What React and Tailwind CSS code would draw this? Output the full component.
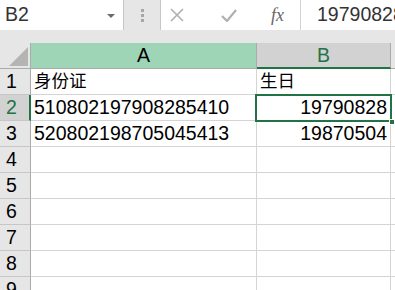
import { Fragment } from 'react';

const rows = [
  { n: 1, a: '身份证', b: '生日', cjk: true },
  { n: 2, a: '510802197908285410', b: '19790828' },
  { n: 3, a: '520802198705045413', b: '19870504' },
  { n: 4 },
  { n: 5 },
  { n: 6 },
  { n: 7 },
  { n: 8 },
  { n: 9 },
];

const font = { fontFamily: '"Liberation Sans", "Noto Sans CJK SC", sans-serif' };

function CellText({ children, cjk, right }) {
  return (
    <span
      className={`${cjk ? 'text-[17.5px]' : 'text-[19.5px]'} leading-[22px] text-black ${right ? 'ml-auto pr-[3px]' : 'pl-[3px]'}`}
    >
      {children}
    </span>
  );
}

export default function App() {
  return (
    <div className="w-[395px] h-[290px] overflow-hidden bg-white relative" style={font}>
      {/* formula bar */}
      <div className="flex h-[30px] bg-white">
        <div className="w-[124px] border-r border-[#c6c6c6] flex items-center pl-[5px] pr-[8px]">
          <span className="text-[19.5px] text-[#333]">B2</span>
          <span className="ml-auto mt-[1px] w-0 h-0 border-l-[4px] border-r-[4px] border-t-[4px] border-l-transparent border-r-transparent border-t-[#6b6b6b]" />
        </div>
        <div className="w-[37px] bg-[#e6e6e6] border-r border-[#c6c6c6] flex flex-col items-center justify-center gap-[2px] pl-[1px]">
          <span className="w-[3px] h-[3px] bg-[#a6a6a6]" />
          <span className="w-[3px] h-[3px] bg-[#a6a6a6]" />
          <span className="w-[3px] h-[3px] bg-[#a6a6a6]" />
        </div>
        <div className="flex items-center w-[140px] border-r border-[#d4d4d4] h-full shrink-0">
          <svg width="14" height="14" viewBox="0 0 14 14" className="ml-[9px]">
            <path d="M1 1 L13 13 M13 1 L1 13" stroke="#b0b0b0" strokeWidth="1.6" fill="none" />
          </svg>
          <svg width="16" height="13" viewBox="0 0 16 13" className="ml-[37px]">
            <path d="M1 7 L6 12 L15 1" stroke="#b0b0b0" strokeWidth="2.2" fill="none" />
          </svg>
          <span className="ml-[34px] text-[18px] italic text-[#666]" style={{ fontFamily: '"Liberation Serif", serif' }}>
            fx
          </span>
        </div>
        <div className="flex-1 flex items-center pl-[16px] min-w-0">
          <span className="text-[19.5px] text-[#333] whitespace-nowrap">19790828</span>
        </div>
      </div>

      {/* gray band */}
      <div className="h-[13px] bg-[#e6e6e6]" />

      {/* grid */}
      <div className="grid grid-cols-[31px_226px_134px_1fr] grid-rows-[26px] auto-rows-[26px]">
        <div className="bg-[#e6e6e6] border-r border-b border-[#ababab] relative">
          <svg width="19" height="19" viewBox="0 0 19 19" className="absolute right-[2px] bottom-[2px]">
            <path d="M19 0 L19 19 L0 19 Z" fill="#b4b4b4" />
          </svg>
        </div>
        <div className="bg-[#9fd5b7] border-r border-b border-[#ababab] flex items-end justify-center pb-[2px]">
          <span className="text-[19.5px] leading-[22px] text-black">A</span>
        </div>
        <div className="bg-[#d2d2d2] border-r border-[#ababab] border-b-2 border-b-[#217346] flex items-end justify-center pb-[1px]">
          <span className="text-[19.5px] leading-[22px] text-[#217346]">B</span>
        </div>
        <div className="bg-[#e6e6e6] border-b border-[#ababab]" />

        {rows.map((r) => {
          const sel = r.n === 2;
          return (
            <Fragment key={r.n}>
              <div
                className={`${sel ? 'bg-[#d2d2d2] border-r-2 border-r-[#217346] text-[#217346]' : 'bg-[#e6e6e6] border-r border-r-[#ababab] text-black'} border-b border-b-[#c6c6c6] flex items-end pl-[6px] pb-[2px]`}
              >
                <span className="text-[19.5px] leading-[22px]">{r.n}</span>
              </div>
              <div className="border-r border-b border-[#d4d4d4] flex items-end pb-[2px]">
                {r.a && <CellText cjk={r.cjk}>{r.a}</CellText>}
              </div>
              <div className="border-r border-b border-[#d4d4d4] flex items-end pb-[2px]">
                {r.b && <CellText cjk={r.cjk} right={!r.cjk}>{r.b}</CellText>}
              </div>
              <div className="border-b border-[#d4d4d4]" />
            </Fragment>
          );
        })}
      </div>

      {/* selection box on B2 */}
      <div className="absolute left-[255px] top-[94px] w-[137px] h-[28px] border-2 border-[#217346] pointer-events-none" />
      <div className="absolute left-[389px] top-[119px] w-[6px] h-[6px] bg-[#217346] border border-white" />
    </div>
  );
}
